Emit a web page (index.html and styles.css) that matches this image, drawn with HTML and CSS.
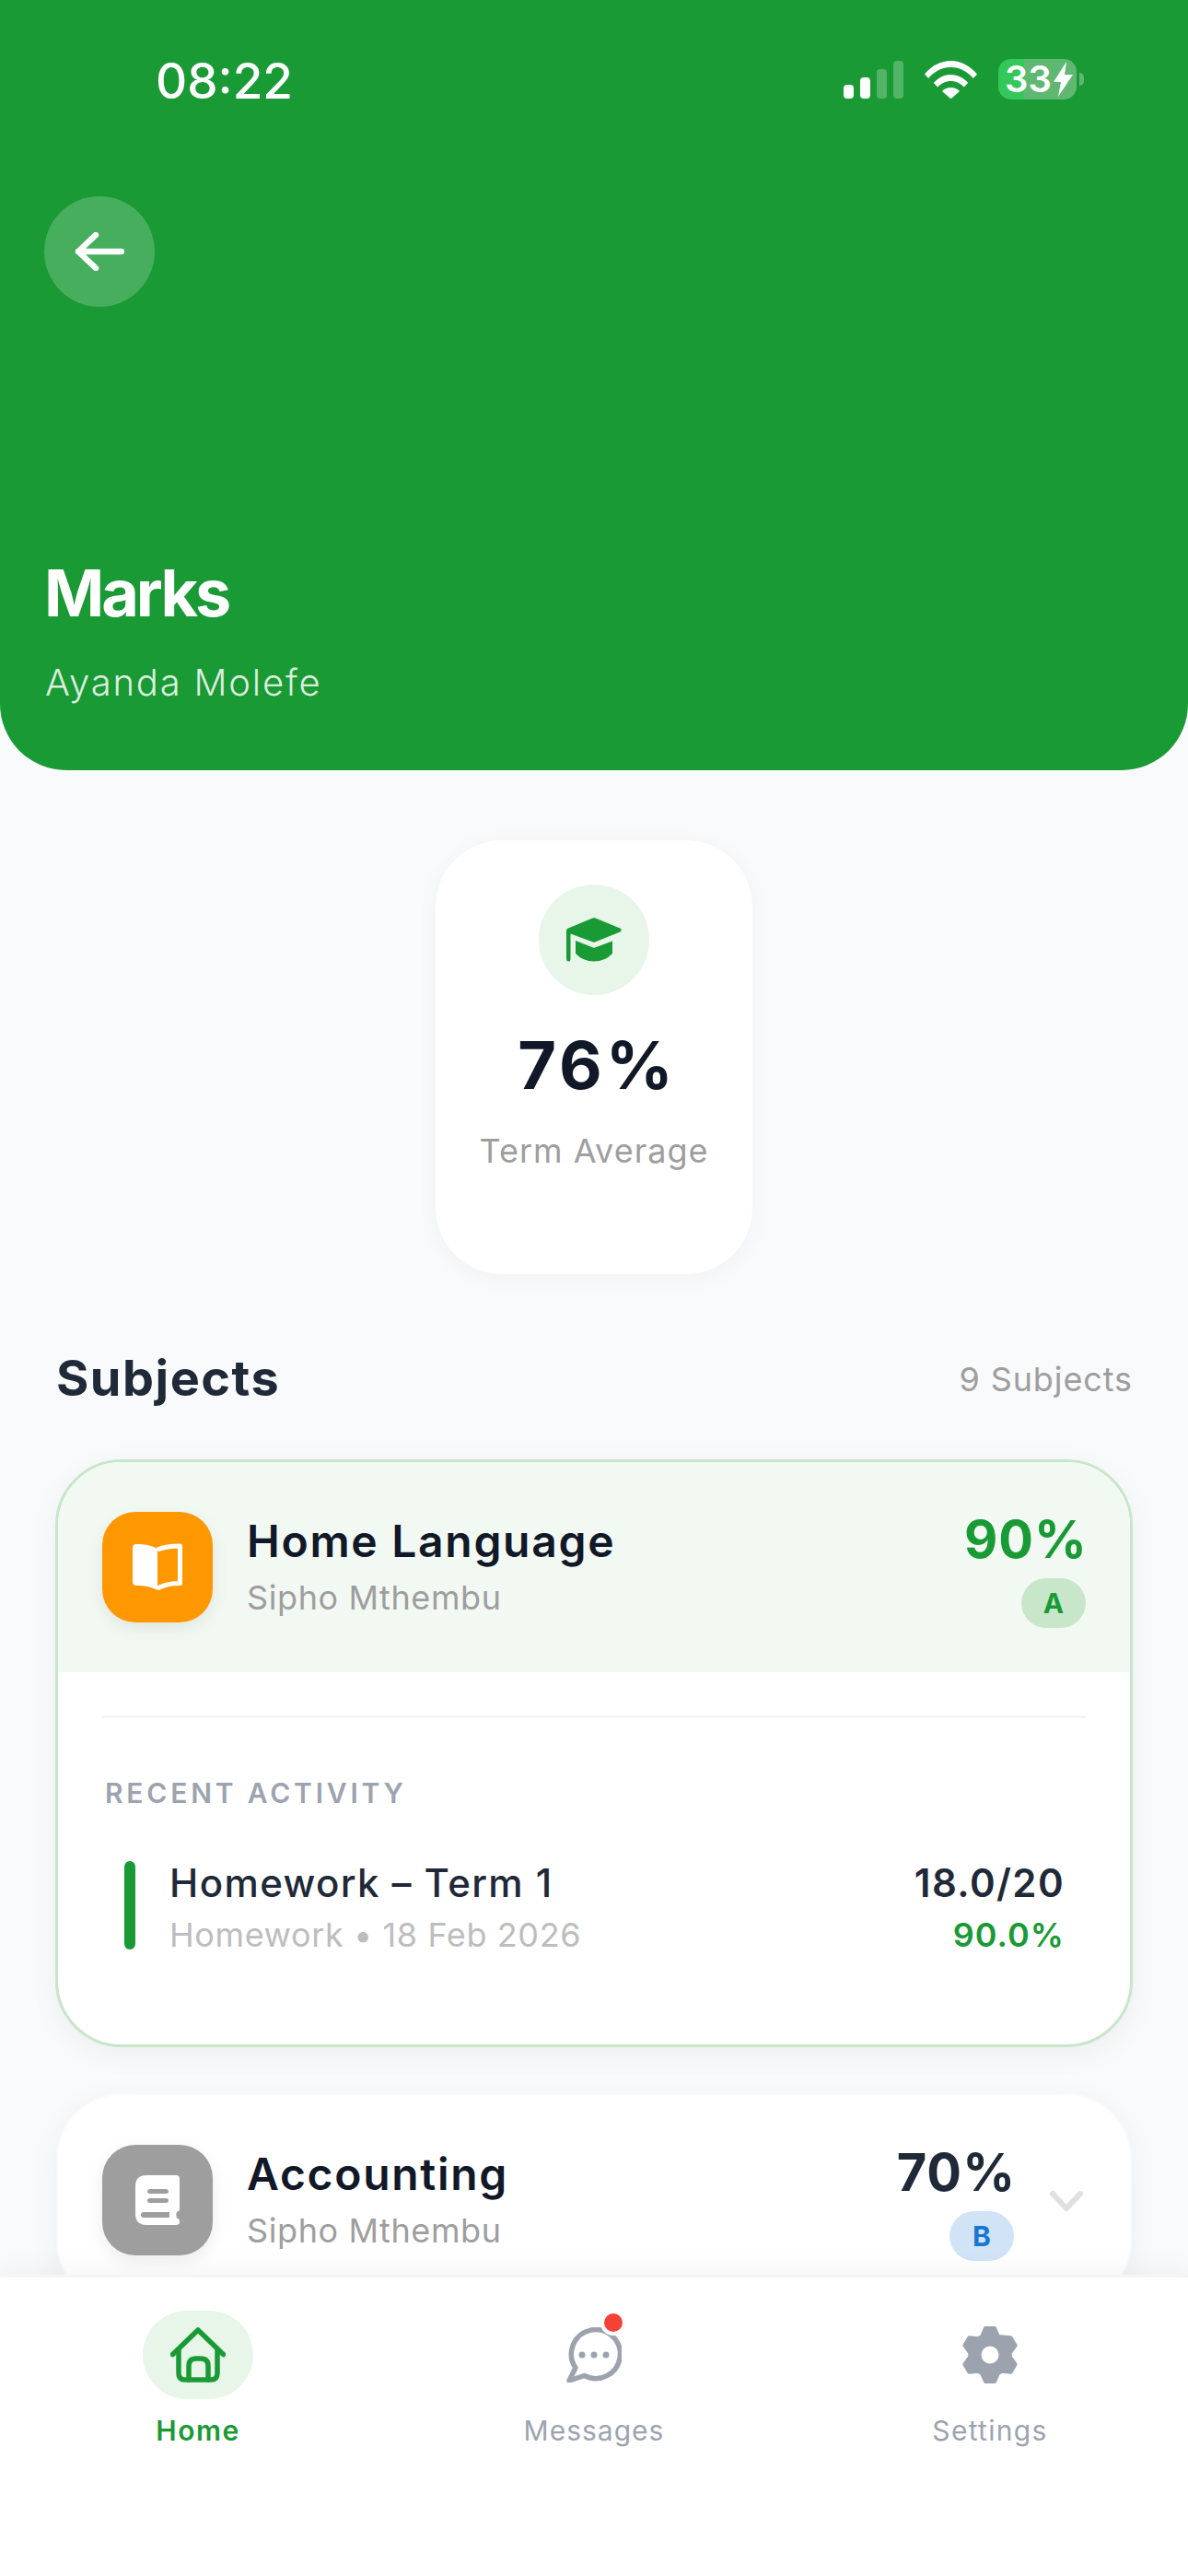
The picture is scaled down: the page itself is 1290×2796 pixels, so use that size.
FILE: index.html
```html
<!DOCTYPE html>
<html>
    <head>
        <title>Marks</title>
        <link rel="stylesheet" href="styles.css">
    </head>
    <body>
        <div class="screen">
            <header class="top">
                <div class="status">
                    <span class="time">08:22</span>
                    <div class="status-icons">
                        <div class="signal">
                            <i class="bar bar1"></i>
                            <i class="bar bar2"></i>
                            <i class="bar bar3 off"></i>
                            <i class="bar bar4 off"></i>
                        </div>
                        <svg class="wifi" width="57" height="41" viewBox="0 0 57 41">
                            <path fill="#fff" d="M0 14.500C7.500 5.500 17.500 0 28.500 0S49.500 5.500 57 14.500L52.800 19C46.500 11.500 38 7 28.500 7S10.500 11.500 4.200 19Z"/>
                            <path fill="#fff" d="M9.800 24C14.500 18.500 21 15 28.500 15S42.500 18.500 47.200 24L42.800 28.500C39 24.500 34 22 28.500 22S18 24.500 14.200 28.500Z"/>
                            <path fill="#fff" d="M19 33C21.500 30.500 25 29 28.500 29S35.500 30.500 38 33L29.500 40.500Q28.500 41.200 27.500 40.500Z"/>
                        </svg>
                        <div class="battery">
                            <div class="battery-body">
                                <span class="battery-num">33</span>
                                <svg width="21" height="38" viewBox="0 0 21 38">
                                    <path fill="#fff" d="M14 0L0 22H8L5 38L21 14H12Z"/>
                                </svg>
                            </div>
                            <i class="battery-tip"></i>
                        </div>
                    </div>
                </div>
                <button class="back">
                    <svg width="54" height="42" viewBox="0 0 54 42" fill="none" stroke="#fff" stroke-width="6.500" stroke-linecap="round" stroke-linejoin="round">
                        <path d="M51 21H4M23 3L4 21L23 39"/>
                    </svg>
                </button>
                <h1 class="page-title">Marks</h1>
                <p class="page-sub">Ayanda Molefe</p>
            </header>

            <main class="content">
                <div class="avg-card">
                    <div class="avg-icon">
                        <svg width="60" height="48" viewBox="0 0 60 48">
                            <path fill="#1a9a35" d="M28.500 .4Q30 -.1 31.500 .4L58.800 11.800Q60.500 13.500 58.800 15.200L31 26.600Q30 27 29 26.600L4.500 17.400V45Q4.500 47.500 2.300 47.500T0 45V14Q0 12.500 1.500 11.800Z"/>
                            <path fill="#1a9a35" d="M10 25L29 32.500Q30 33 31 32.500L50 25.500V39Q42 47.500 30 47.500T10 39Z"/>
                        </svg>
                    </div>
                    <div class="avg-num">76%</div>
                    <div class="avg-label">Term Average</div>
                </div>

                <div class="section-head">
                    <h2 class="section-title">Subjects</h2>
                    <span class="section-count">9 Subjects</span>
                </div>

                <!-- open subject -->
                <section class="subject subject-open">
                    <div class="subject-head head-open">
                        <div class="subject-icon icon-orange">
                            <svg width="54" height="52" viewBox="0 0 54 52">
                                <path fill="#fff" d="M4 1C12 1 20 2 27 6V51C20 47 12 46 4 46Q0 46 0 42V5Q0 1 4 1Z"/>
                                <path fill="none" stroke="#fff" stroke-width="5" stroke-linejoin="round" d="M27 7C34 4 42 3 51.500 3V43.500C42 43.500 34 45 27 49"/>
                            </svg>
                        </div>
                        <div class="subject-text">
                            <div class="subject-name">Home Language</div>
                            <div class="subject-teacher">Sipho Mthembu</div>
                        </div>
                        <div class="subject-score">
                            <div class="score-num score-green">90%</div>
                            <div class="grade grade-a">A</div>
                        </div>
                    </div>
                    <div class="subject-body">
                        <div class="divider"></div>
                        <div class="activity-label">RECENT ACTIVITY</div>
                        <div class="activity">
                            <i class="activity-bar"></i>
                            <div class="activity-text">
                                <div class="activity-name">Homework – Term 1</div>
                                <div class="activity-meta">Homework • 18 Feb 2026</div>
                            </div>
                            <div class="activity-marks">
                                <div class="activity-score">18.0/20</div>
                                <div class="activity-pct">90.0%</div>
                            </div>
                        </div>
                    </div>
                </section>

                <section class="subject">
                    <div class="subject-head">
                        <div class="subject-icon icon-grey">
                            <svg width="48" height="54" viewBox="0 0 48 54">
                                <path fill="#fff" fill-rule="evenodd" d="M12 0H44Q48 0 48 4V37Q48 39 45 39.500Q43.500 43 45 46.500Q48 47 48 50.500Q48 54 44 54H12Q0 54 0 42V12Q0 0 12 0ZM16 15Q13 15 13 17.500T16 20H33Q36 20 36 17.500T33 15ZM16 25Q13 25 13 27.500T16 30H33Q36 30 36 27.500T33 25ZM9 40Q6 40 6 43T9 46H37V40Z"/>
                            </svg>
                        </div>
                        <div class="subject-text">
                            <div class="subject-name">Accounting</div>
                            <div class="subject-teacher">Sipho Mthembu</div>
                        </div>
                        <div class="subject-score">
                            <div class="score-num">70%</div>
                            <div class="grade grade-b">B</div>
                        </div>
                        <svg class="chevron" width="42" height="24" viewBox="0 0 42 24" fill="none" stroke="#e0e0e0" stroke-width="6" stroke-linecap="round" stroke-linejoin="round">
                            <path d="M6 3L21 19L36 3"/>
                        </svg>
                    </div>
                </section>
            </main>

            <nav class="tabs">
                <div class="tab tab-active">
                    <div class="tab-icon home-pill">
                        <svg width="60" height="60" viewBox="0 0 60 60" fill="none" stroke="#1a9a35" stroke-width="5.500" stroke-linecap="round" stroke-linejoin="round">
                            <path d="M2.500 29.500L30 3L57.500 29.500"/>
                            <path d="M9 24V50Q9 57 16 57H44Q51 57 51 50V24"/>
                            <path d="M20 57V42Q20 34 28 34H33Q41 34 41 42V57"/>
                        </svg>
                    </div>
                    <span class="tab-label">Home</span>
                </div>
                <div class="tab">
                    <div class="tab-icon">
                        <div class="msg-wrap">
                            <svg width="60" height="60" viewBox="0 0 60 60" fill="none" stroke="#9ca3af" stroke-width="5.500" stroke-linecap="round" stroke-linejoin="round">
                                <path d="M10 44A26.500 26.500 0 1 1 19.500 52.500L3 58Z"/>
                                <circle cx="17" cy="30" r="3.500" fill="#9ca3af" stroke="none"/>
                                <circle cx="30" cy="30" r="3.500" fill="#9ca3af" stroke="none"/>
                                <circle cx="43" cy="30" r="3.500" fill="#9ca3af" stroke="none"/>
                            </svg>
                            <i class="msg-dot"></i>
                        </div>
                    </div>
                    <span class="tab-label">Messages</span>
                </div>
                <div class="tab">
                    <div class="tab-icon">
                        <svg width="64" height="66" viewBox="-32 -33 64 66">
                            <path fill="#9ca3af" stroke="#9ca3af" stroke-width="4" stroke-linejoin="round" fill-rule="evenodd" d="M-5 -29H5L9 -20L22.600 -18.800L27.600 -10.200L21.800 -2.200V2.200L27.600 10.200L22.600 18.800L12.800 17.800L9 20L5 29H-5L-9 20L-12.800 17.800L-22.600 18.800L-27.600 10.200L-21.800 2.200V-2.200L-27.600 -10.200L-22.600 -18.800L-12.800 -17.800L-9 -20ZM11.500 0A11.500 11.500 0 1 0 -11.500 0A11.500 11.500 0 1 0 11.500 0Z"/>
                        </svg>
                    </div>
                    <span class="tab-label tab-settings">Settings</span>
                </div>
            </nav>
        </div>
    </body>
</html>
```

FILE: styles.css
```css
* {
    box-sizing: border-box;
}
html, body {
    margin: 0;
    padding: 0;
}
body {
    font-family: Inter, "Noto Sans", sans-serif;
    background-color: #f9fafb;
}
.screen {
    width: 1290px;
    height: 2796px;
    display: flex;
    flex-direction: column;
    overflow: hidden;
}

/* green header */
.top {
    height: 836px;
    flex-shrink: 0;
    background-color: #1a9a35;
    border-radius: 0 0 72px 72px;
    padding: 0 48px;
    color: white;
}
.status {
    height: 213px;
    padding: 58px 0 0 121px;
    display: flex;
    justify-content: space-between;
    align-items: flex-start;
}
.time {
    font-size: 53px;
    font-weight: 500;
    line-height: 60px;
}
.status-icons {
    display: flex;
    align-items: center;
    margin-top: 6px;
    margin-right: 65px;
}
.signal {
    display: flex;
    align-items: flex-end;
    gap: 7px;
    height: 41px;
    margin-right: 23px;
}
.bar {
    display: block;
    width: 11px;
    background-color: white;
    border-radius: 4px;
}
.bar1 { height: 15px; }
.bar2 { height: 23px; }
.bar3 { height: 32px; }
.bar4 { height: 41px; }
.off {
    background-color: rgba(255, 255, 255, 0.25);
}
.battery {
    display: flex;
    align-items: center;
    margin-left: 23px;
}
.battery-body {
    width: 85px;
    height: 44px;
    border-radius: 14px;
    display: flex;
    align-items: center;
    padding-left: 7px;
    gap: 2px;
    background: linear-gradient(90deg, #34c759 28px, rgba(255, 255, 255, 0.3) 28px);
}
.battery-num {
    font-size: 40px;
    font-weight: 600;
    line-height: 44px;
}
.battery-tip {
    display: block;
    width: 5px;
    height: 14px;
    margin-left: 3px;
    border-radius: 0 5px 5px 0;
    background-color: rgba(255, 255, 255, 0.3);
}
.back {
    width: 120px;
    height: 120px;
    padding: 0;
    border: none;
    border-radius: 60px;
    background-color: rgba(255, 255, 255, 0.2);
    display: flex;
    align-items: center;
    justify-content: center;
}
.page-title {
    margin: 267px 0 0;
    font-size: 70px;
    font-weight: 700;
    line-height: 88px;
    letter-spacing: -3px;
}
.page-sub {
    margin: 29px 0 0;
    padding-left: 1px;
    font-size: 40px;
    font-weight: 300;
    line-height: 48px;
    letter-spacing: 1.800px;
    color: rgba(255, 255, 255, 0.85);
}

/* content */
.content {
    flex: 1;
    min-height: 0;
    overflow: hidden;
    padding: 76px 60px 0;
}
.avg-card {
    width: 344px;
    height: 471px;
    margin: 0 auto;
    padding-top: 48px;
    border-radius: 72px;
    background-color: white;
    box-shadow: 0 4px 24px rgba(0, 0, 0, 0.04);
    display: flex;
    flex-direction: column;
    align-items: center;
}
.avg-icon {
    width: 120px;
    height: 120px;
    border-radius: 60px;
    background-color: #e8f5e9;
    display: flex;
    align-items: center;
    justify-content: center;
}
.avg-num {
    margin-top: 32px;
    padding-left: 7px;
    font-size: 72px;
    font-weight: 700;
    line-height: 88px;
    letter-spacing: 4px;
    color: #111827;
}
.avg-label {
    margin-top: 27px;
    font-size: 36px;
    line-height: 44px;
    letter-spacing: 1px;
    color: #9e9e9e;
}
.section-head {
    margin-top: 80px;
    display: flex;
    justify-content: space-between;
    align-items: center;
}
.section-title {
    margin: 0;
    font-size: 54px;
    font-weight: 700;
    line-height: 66px;
    letter-spacing: 1.500px;
    color: #1f2937;
    padding-left: 1px;
}
.section-count {
    font-size: 36px;
    line-height: 44px;
    letter-spacing: 0.900px;
    color: #9e9e9e;
    padding-top: 2px;
}

/* subject cards */
.subject {
    margin-top: 49px;
    border: 3px solid transparent;
    border-radius: 72px;
    background-color: white;
    background-clip: padding-box;
    box-shadow: 0 8px 32px rgba(0, 0, 0, 0.05);
    overflow: hidden;
}
.subject-open {
    margin-top: 55px;
    border-color: #c8e6c9;
    background-clip: border-box;
}
.subject-head {
    height: 228px;
    padding: 0 48px;
    display: flex;
    align-items: center;
}
.head-open {
    background-color: #f2f9f3;
}
.subject-icon {
    width: 120px;
    height: 120px;
    border-radius: 36px;
    display: flex;
    align-items: center;
    justify-content: center;
    flex-shrink: 0;
    box-shadow: 0 6px 18px rgba(0, 0, 0, 0.08);
}
.icon-orange {
    background-color: #ff9800;
}
.icon-grey {
    background-color: #9e9e9e;
}
.subject-text {
    flex: 1;
    margin-left: 37px;
}
.subject-name {
    font-size: 48px;
    font-weight: 600;
    line-height: 56px;
    letter-spacing: 1.700px;
    color: #111827;
    margin-top: -1px;
}
.subject-teacher {
    margin-top: 11px;
    font-size: 36px;
    line-height: 44px;
    letter-spacing: 0.600px;
    color: #9e9e9e;
}
.subject-score {
    display: flex;
    flex-direction: column;
    align-items: flex-end;
    margin-top: 4px;
}
.score-num {
    font-size: 56px;
    font-weight: 700;
    line-height: 64px;
    letter-spacing: 1px;
    color: #1f2937;
    margin-right: -2px;
}
.score-green {
    color: #1a9a35;
}
.grade {
    min-width: 70px;
    height: 54px;
    margin-top: 10px;
    border-radius: 27px;
    font-size: 30px;
    font-weight: 700;
    line-height: 54px;
    text-align: center;
}
.grade-a {
    background-color: #c8e6c9;
    color: #1a9a35;
}
.grade-b {
    background-color: #d0e3f7;
    color: #1976d2;
}
.chevron {
    margin-left: 36px;
    margin-top: 4px;
}
.subject-body {
    padding: 47px 48px 103px;
}
.divider {
    height: 3px;
    background-color: #f5f5f5;
}
.activity-label {
    margin-top: 63px;
    padding-left: 3px;
    font-size: 30px;
    font-weight: 600;
    line-height: 36px;
    letter-spacing: 3.800px;
    color: #9ca3af;
}
.activity {
    margin-top: 56px;
    height: 96px;
    padding: 0 23px 0 24px;
    display: flex;
    align-items: center;
}
.activity-bar {
    display: block;
    width: 12px;
    height: 96px;
    border-radius: 6px;
    background-color: #1a9a35;
}
.activity-text {
    flex: 1;
    margin-left: 37px;
    padding-top: 6px;
}
.activity-name {
    font-size: 42px;
    font-weight: 500;
    line-height: 52px;
    letter-spacing: 1.400px;
    color: #1f2937;
    margin-top: -2px;
}
.activity-meta {
    margin-top: 8px;
    font-size: 36px;
    line-height: 44px;
    letter-spacing: 0.600px;
    color: #bdbdbd;
}
.activity-marks {
    text-align: right;
    padding-top: 6px;
}
.activity-score {
    font-size: 42px;
    font-weight: 600;
    line-height: 52px;
    letter-spacing: 1.400px;
    color: #1f2937;
    margin-top: -2px;
}
.activity-pct {
    margin-top: 8px;
    font-size: 36px;
    font-weight: 600;
    line-height: 44px;
    letter-spacing: 1px;
    color: #1a9a35;
}

/* bottom tabs */
.tabs {
    height: 327px;
    flex-shrink: 0;
    position: relative;
    display: flex;
    align-items: flex-start;
    padding-top: 36px;
    background-color: white;
    border-top: 3px solid #f5f5f5;
    box-shadow: 0 -8px 24px rgba(0, 0, 0, 0.04);
}
.tab {
    flex: 1;
    display: flex;
    flex-direction: column;
    align-items: center;
}
.tab-icon {
    width: 120px;
    height: 96px;
    display: flex;
    align-items: center;
    justify-content: center;
}
.home-pill {
    border-radius: 48px;
    background-color: #e8f5e9;
}
.tab-label {
    margin-top: 16px;
    font-size: 30px;
    font-weight: 400;
    line-height: 36px;
    letter-spacing: 1px;
    color: #9ca3af;
}
.tab-active .tab-label {
    font-weight: 600;
    color: #1a9a35;
    letter-spacing: 1.500px;
}
.tab-settings {
    letter-spacing: 1.300px;
}
.msg-wrap {
    position: relative;
    width: 60px;
    height: 60px;
}
/* red dot sits over the bubble corner */
.msg-dot {
    position: absolute;
    top: -19px;
    right: -5px;
    width: 28px;
    height: 28px;
    border: 4px solid white;
    border-radius: 14px;
    background-color: #f44336;
}
```
